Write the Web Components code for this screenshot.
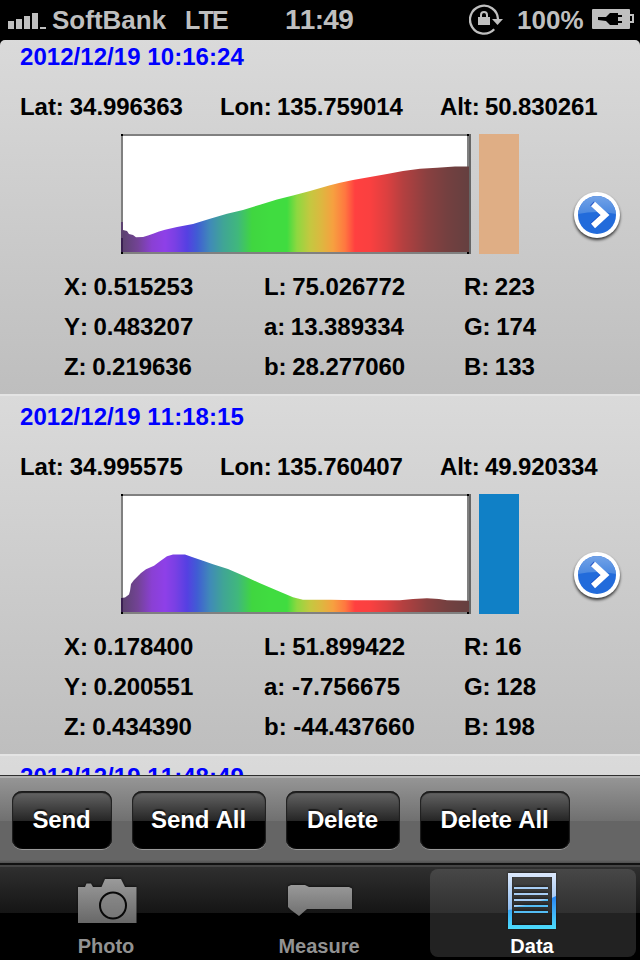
<!DOCTYPE html>
<html lang="en">
<head>
<meta charset="utf-8">
<title>Data</title>
<style>
  body {
    margin: 0;
    width: 640px;
    height: 960px;
    overflow: hidden;
    background: #000;
    font-family: "Liberation Sans", Arial, sans-serif;
    font-weight: bold;
    font-kerning: none;
    display: flex;
    flex-direction: column;
  }
</style>
</head>
<body>
  <status-bar carrier="SoftBank" network="LTE" time="11:49" battery="100%"></status-bar>
  <record-list>
    <record-cell date="2012/12/19 10:16:24" lat="34.996363" lon="135.759014" alt="50.830261"
      x="0.515253" y="0.483207" z="0.219636" l="75.026772" a="13.389334" b="28.277060" rgb="223,174,133"
      curve="0,88 2,88 2,96 6,97 8,100 12,101 15,103.2 22,103 27,101.6 32,99.7 38,97.6 44,95.8 56,93 72,90 89,84.7 106,79.8 122,76 139,70.7 156,65.6 172,61.6 189,57 209,51.2 219,48.8 232,46 249,43 266,40 282,37 299,34.7 316,33.7 334,32.6 348,32.4"></record-cell>
    <record-cell date="2012/12/19 11:18:15" lat="34.995575" lon="135.760407" alt="49.920334"
      x="0.178400" y="0.200551" z="0.434390" l="51.899422" a="-7.756675" b="-44.437660" rgb="16,128,198"
      curve="0,104 4,103.6 8,100.5 9,97 10,90 13,86 20,79 25,75.3 33,71.8 39,67.3 46,62.3 52,60.5 64,60.5 71,63 82,66.8 92,70.2 107,75 122,81.5 139,89.2 156,96.5 172,103.2 182,105.8 210,105.8 234,106.2 279,106.2 292,105 306,104.2 318,105 326,106.2 348,106.8"></record-cell>
    <record-cell date="2012/12/19 11:48:49"></record-cell>
  </record-list>
  <tool-bar>
    <glossy-button style="width:100px">Send</glossy-button>
    <glossy-button style="width:134px">Send All</glossy-button>
    <glossy-button style="width:114px">Delete</glossy-button>
    <glossy-button style="width:150px">Delete All</glossy-button>
  </tool-bar>
  <tab-bar>
    <tab-item label="Photo">
      <svg width="64" height="56" viewBox="0 0 64 56">
        <defs><linearGradient id="cam" x1="0" y1="0" x2="0" y2="1"><stop offset="0" stop-color="#9a9a9a"/><stop offset="1" stop-color="#686868"/></linearGradient></defs>
        <path d="M4 14H11L12.500 10.500H17L19 14H27.500L31 6H47L51 14H62.500V50H4Z" fill="url(#cam)"/>
        <circle cx="39" cy="32.500" r="13" fill="#858585" fill-opacity=".4" stroke="#080808" stroke-width="2"/>
      </svg>
    </tab-item>
    <tab-item label="Measure">
      <svg width="66" height="56" viewBox="-2 0 66 56">
        <defs><linearGradient id="mea" x1="0" y1="0" x2="0" y2="1"><stop offset="0" stop-color="#999"/><stop offset="1" stop-color="#707070"/></linearGradient></defs>
        <path d="M0 13.500L3 12H17L21 14H61L64 15.500V36H19L11 43L3 37L0 34Z" fill="url(#mea)"/>
      </svg>
    </tab-item>
    <tab-item label="Data" selected>
      <svg width="48" height="56" viewBox="0 0 48 56">
        <defs>
          <linearGradient id="pale" x1="0" y1="0" x2="0" y2="1"><stop offset="0" stop-color="#dce8fb"/><stop offset=".7" stop-color="#8abaf0"/></linearGradient>
          <linearGradient id="deep" x1="0" y1="0" x2="0" y2="1"><stop offset="0" stop-color="#2484f4"/><stop offset=".35" stop-color="#3aa4f6"/><stop offset="1" stop-color="#4cdcfc"/></linearGradient>
          <clipPath id="doc"><path clip-rule="evenodd" d="M0 0H48V56H0ZM4 4V52H44V4Z"/></clipPath>
        </defs>
        <g clip-path="url(#doc)">
          <path d="M0 0H48V56H0Z" fill="url(#pale)"/>
          <path d="M0 37Q28 34 48 23V56H0Z" fill="url(#deep)"/>
        </g>
        <path d="M6 14H40V16H6ZM6 20H40V22H6ZM6 26H40V28H6Z" fill="#a8cdf4"/>
        <path d="M6 32H40V34H6ZM6 38H40V40H6ZM32 28L40 26V28Z" fill="#54bdf4"/>
        <path d="M6 32H18L6 34Z" fill="#a8cdf4"/>
      </svg>
    </tab-item>
  </tab-bar>

<script>
class StatusBar extends HTMLElement {
  connectedCallback() {
    this.attachShadow({ mode: 'open' }).innerHTML = `
      <style>
        :host { display: grid; grid-template-columns: 52px 133px 100px 184px 48px 75px 48px; height: 40px; flex: none; line-height: 40px; font-size: 26px; color: #bfbfbf; background: #000; white-space: nowrap; }
        svg { display: block; }
        .net { font-size: 25px; letter-spacing: -1.8px; }
        .time { font-size: 28px; line-height: 39px; letter-spacing: -.7px; }
      </style>
      <svg width="52" height="40" fill="#bfbfbf"><path d="M8 21H14V29H8ZM16 19H22V29H16ZM24 16H30V29H24ZM32 13H38V29H32ZM40 27H46V29H40Z"/></svg>
      <span>${this.getAttribute('carrier')}</span>
      <span class="net">${this.getAttribute('network')}</span>
      <span class="time">${this.getAttribute('time')}</span>
      <svg width="48" height="40">
        <path d="M25.200 29.300A14 14 0 1 1 29 19" fill="none" stroke="#bfbfbf" stroke-width="2.300"/>
        <path d="M23 19H34L28.500 25Z" fill="#bfbfbf"/>
        <path d="M9 17H21V25H9Z" fill="#bfbfbf"/>
        <path d="M12 18V15A3 3 0 0 1 18 15V18" fill="none" stroke="#bfbfbf" stroke-width="2"/>
      </svg>
      <span>${this.getAttribute('battery')}</span>
      <svg width="48" height="40">
        <rect y="9" width="38" height="20" rx="1" fill="#bfbfbf"/>
        <path d="M38 15H41V22H38" fill="none" stroke="#bfbfbf" stroke-width="2"/>
        <path d="M6 17H14L18 13H26V15H30V17H26V21H30V23H26V25H18L14 21L6 20Z" fill="#000"/>
      </svg>`;
  }
}

class RecordList extends HTMLElement {
  connectedCallback() {
    this.attachShadow({ mode: 'open' }).innerHTML = `
      <style>
        :host { display: block; height: 735px; flex: none; overflow: hidden; border-radius: 5px 5px 0 0; }
        .scroll { margin-top: -6px; }
      </style>
      <div class="scroll"><slot></slot></div>`;
  }
}

class SpectrumChart extends HTMLElement {
  connectedCallback() {
    // wavelength ramp, x position in px -> colour
    const ramp = [[2, '#5c4270'], [17, '#734396'], [31, '#8a40d4'], [44, '#8e40e8'], [54, '#7a40e4'], [66, '#5540e2'],
      [76, '#405cd4'], [89, '#408ab8'], [102, '#40a496'], [117, '#40b87c'], [131, '#40d640'], [149, '#40dc40'],
      [166, '#40dc40'], [176, '#8ed840'], [189, '#c4c840'], [200, '#dcb840'], [212, '#f6a040'], [224, '#ff7840'],
      [234, '#ff4040'], [249, '#fa4040'], [266, '#dc4040'], [282, '#b44040'], [306, '#8a4040'], [326, '#744040'], [346, '#664040']];
    const stops = ramp.map(([x, c]) => `<stop offset="${x / 350}" stop-color="${c}"/>`).join('');
    this.attachShadow({ mode: 'open' }).innerHTML = `
      <style>:host { display: block; width: 350px; height: 120px; } svg { display: block; }</style>
      <svg width="350" height="120">
        <defs><linearGradient id="ramp" gradientUnits="userSpaceOnUse" x1="0" y1="0" x2="350" y2="0">${stops}</linearGradient></defs>
        <rect width="350" height="120" fill="#808080"/>
        <rect x="2" y="2" width="344" height="116" fill="#fff"/>
        <polygon points="${this.getAttribute('curve')} 348,118 0,118" fill="url(#ramp)"/>
        <rect y="104" width="2" height="14" fill="#3a2052"/>
        <rect x="348" width="2" height="120" fill="#666"/>
        <path d="M0 0H2V2H0ZM0 118H2V120H0ZM346 0H348V2H346ZM346 118H348V120H346Z"/>
      </svg>`;
  }
}

class DisclosureButton extends HTMLElement {
  connectedCallback() {
    this.attachShadow({ mode: 'open' }).innerHTML = `
      <style>:host { display: block; width: 54px; height: 58px; } svg { display: block; }</style>
      <svg width="54" height="58">
        <defs>
          <linearGradient id="top" x1="0" y1="0" x2="0" y2="1"><stop offset="0" stop-color="#84aeea"/><stop offset="1" stop-color="#4584df"/></linearGradient>
          <filter id="soft" x="-20%" y="-20%" width="140%" height="140%"><feGaussianBlur stdDeviation="1.800"/></filter>
          <clipPath id="disc"><circle cx="27" cy="27" r="19"/></clipPath>
        </defs>
        <circle cx="27" cy="29" r="23" fill="#000" opacity=".75" filter="url(#soft)"/>
        <circle cx="27" cy="27" r="23" fill="#fff"/>
        <g clip-path="url(#disc)">
          <rect width="54" height="58" fill="#226bdb"/>
          <path d="M0 0H54V28Q27 20 0 28Z" fill="url(#top)"/>
        </g>
        <path d="M22 15.500L34 26.500L22 37.500" fill="none" stroke="#0b3bbd" stroke-width="5.500" opacity=".7"/>
        <path d="M23 16L35 27L23 38" fill="none" stroke="#fff" stroke-width="6"/>
      </svg>`;
  }
}

class RecordCell extends HTMLElement {
  connectedCallback() {
    const at = (name) => this.getAttribute(name) || '';
    const [r, g, b] = at('rgb').split(',');
    const signed = (name) => at(name).startsWith('-') ? 'class="neg"' : '';
    const body = !at('curve') ? '' : `
      <div class="geo"><span>Lat: ${at('lat')}</span><span>Lon: ${at('lon')}</span><span>Alt: ${at('alt')}</span></div>
      <div class="graph">
        <spectrum-chart curve="${at('curve')}"></spectrum-chart>
        <div class="swatch"></div>
        <disclosure-button></disclosure-button>
      </div>
      <div class="values">
        <span>X: ${at('x')}</span><span>L: ${at('l')}</span><span>R: ${r}</span>
        <span>Y: ${at('y')}</span><span ${signed('a')}>a: ${at('a')}</span><span>G: ${g}</span>
        <span>Z: ${at('z')}</span><span ${signed('b')}>b: ${at('b')}</span><span>B: ${b}</span>
      </div>`;
    this.attachShadow({ mode: 'open' }).innerHTML = `
      <style>
        :host { display: block; box-sizing: border-box; height: 360px; border-top: 2px solid #e4e4e4; background: linear-gradient(#dadada, #bebebe); font-size: 24px; color: #000; white-space: nowrap; }
        .date { height: 44px; line-height: 42px; padding-left: 20px; letter-spacing: .05px; color: #00f; }
        .geo { display: grid; grid-template-columns: 200px 220px 200px; height: 54px; line-height: 54px; padding-left: 20px; letter-spacing: -.1px; word-spacing: -1.1px; }
        .geo span:first-child { letter-spacing: -.05px; word-spacing: -.6px; }
        .graph { display: flex; height: 120px; padding-left: 121px; }
        .swatch { width: 40px; height: 120px; margin-left: 8px; background: rgb(${at('rgb')}); }
        disclosure-button { margin: 54px 0 0 51px; }
        .values { display: grid; grid-template-columns: 200px 200px 150px; grid-auto-rows: 40px; line-height: 40px; padding: 13px 0 0 64px; letter-spacing: -.05px; word-spacing: -1px; }
        .neg { letter-spacing: 0; word-spacing: 0; }
      </style>
      <div class="date">${at('date')}</div>${body}`;
  }
}

class ToolBar extends HTMLElement {
  connectedCallback() {
    this.attachShadow({ mode: 'open' }).innerHTML = `
      <style>
        :host { display: flex; gap: 20px; box-sizing: border-box; height: 90px; flex: none; padding: 15px 12px 0; border-top: 1px solid #2f2f2f; border-bottom: 2px solid #111;
          background: linear-gradient(#b0b0b0 0 2px, #959595 2px, #707070 45px, #656565 45px, #656565 84px, #505050); }
      </style>
      <slot></slot>`;
  }
}

class GlossyButton extends HTMLElement {
  connectedCallback() {
    this.attachShadow({ mode: 'open' }).innerHTML = `
      <style>
        :host { display: block; box-sizing: border-box; height: 58px; line-height: 57px; padding-right: 1px; border-radius: 10px; text-align: center; font-size: 24px; letter-spacing: -.15px; color: #fff; white-space: nowrap;
          text-shadow: 0 -2px 1px rgba(0,0,0,.6); background: linear-gradient(#666, #252525 30px, #000 30px);
          box-shadow: inset 0 2px 1px #1b1b1b, inset 1px 0 1px #222, inset -1px 0 1px #222, 0 1px 0 #999; }
      </style>
      <slot></slot>`;
  }
}

class TabBar extends HTMLElement {
  connectedCallback() {
    this.attachShadow({ mode: 'open' }).innerHTML = `
      <style>
        :host { display: flex; gap: 7px; box-sizing: border-box; height: 95px; flex: none; padding: 4px 4px 3px;
          background: linear-gradient(#444 0 2px, #2f2f2f 2px, #151515 48px, #000 48px); }
      </style>
      <slot></slot>`;
  }
}

class TabItem extends HTMLElement {
  connectedCallback() {
    this.attachShadow({ mode: 'open' }).innerHTML = `
      <style>
        :host { display: flex; flex-direction: column; align-items: center; box-sizing: border-box; width: 206px; height: 88px; padding: 4px 2px 0 0; border-radius: 8px; font-size: 20px; line-height: 22px; color: #929292; }
        :host([selected]) { color: #fff; background: linear-gradient(#474747, #303030 44px, #222 44px); }
        ::slotted(svg) { display: block; flex: none; filter: drop-shadow(0 -1px 1px rgba(0,0,0,.5)); }
        span { margin-top: 6px; }
      </style>
      <slot></slot>
      <span>${this.getAttribute('label')}</span>`;
  }
}

customElements.define('status-bar', StatusBar);
customElements.define('record-list', RecordList);
customElements.define('spectrum-chart', SpectrumChart);
customElements.define('disclosure-button', DisclosureButton);
customElements.define('record-cell', RecordCell);
customElements.define('tool-bar', ToolBar);
customElements.define('glossy-button', GlossyButton);
customElements.define('tab-bar', TabBar);
customElements.define('tab-item', TabItem);
</script>
</body>
</html>
